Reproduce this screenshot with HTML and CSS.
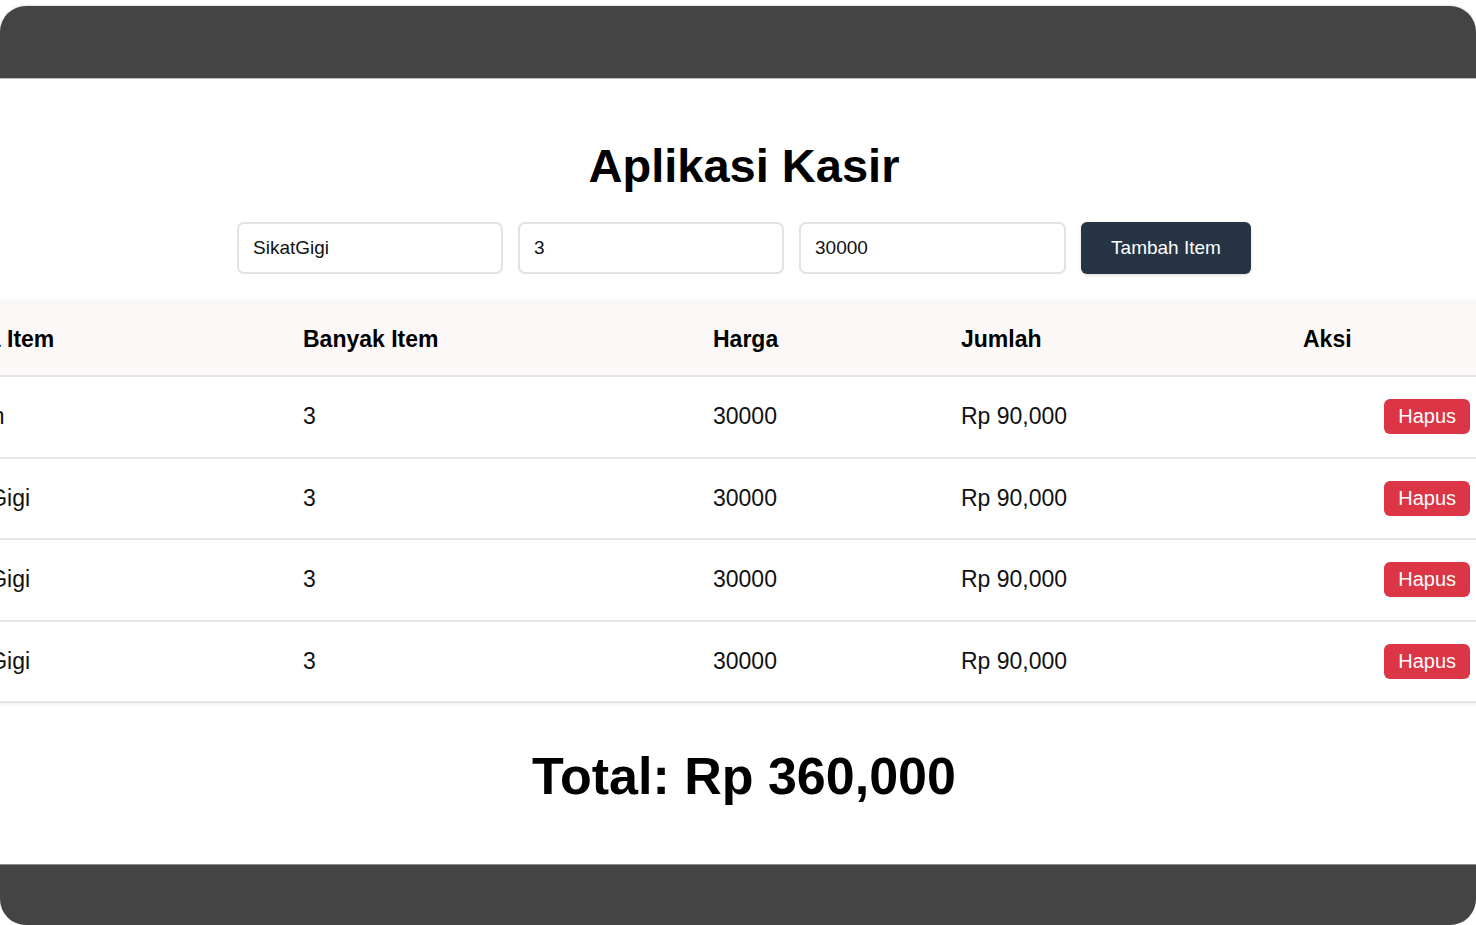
FILE: index.html
```html
<!DOCTYPE html>
<html lang="id">
<head>
<meta charset="utf-8">
<title>Aplikasi Kasir</title>
<link rel="stylesheet" href="styles.css">
</head>
<body>
<div class="device">
  <div class="screen">
    <div class="content">
      <h1 class="title">Aplikasi Kasir</h1>
      <div class="form-row">
        <input class="field" type="text" value="SikatGigi">
        <input class="field" type="text" value="3">
        <input class="field field-wide" type="text" value="30000">
        <button class="btn-add">Tambah Item</button>
      </div>
      <table class="items">
        <colgroup>
          <col class="c-name"><col class="c-qty"><col class="c-price"><col class="c-sum"><col class="c-act">
        </colgroup>
        <thead>
          <tr><th>Nama Item</th><th>Banyak Item</th><th>Harga</th><th>Jumlah</th><th>Aksi</th></tr>
        </thead>
        <tbody>
          <tr><td>Sabun</td><td>3</td><td>30000</td><td>Rp 90,000</td><td class="act"><button class="btn-del">Hapus</button></td></tr>
          <tr><td>SikatGigi</td><td>3</td><td>30000</td><td>Rp 90,000</td><td class="act"><button class="btn-del">Hapus</button></td></tr>
          <tr><td>SikatGigi</td><td>3</td><td>30000</td><td>Rp 90,000</td><td class="act"><button class="btn-del">Hapus</button></td></tr>
          <tr><td>SikatGigi</td><td>3</td><td>30000</td><td>Rp 90,000</td><td class="act"><button class="btn-del">Hapus</button></td></tr>
        </tbody>
      </table>
      <h2 class="total">Total: Rp 360,000</h2>
    </div>
  </div>
</div>
</body>
</html>
```
FILE: styles.css
```css
html, body {
  margin: 0;
  padding: 0;
  background: #ffffff;
  font-family: "Liberation Sans", Arial, sans-serif;
}
.device {
  margin-top: 6px;
  height: 919px;
  box-sizing: border-box;
  background: #444444;
  border-radius: 26px;
  padding: 72px 0 60px;
  box-shadow: 0 -1px 2px rgba(0,0,0,0.12);
  overflow: hidden;
}
.screen {
  height: 787px;
  background: #ffffff;
  overflow: hidden;
  border-top: 1px solid #bdbdbd;
  border-bottom: 1px solid #8a8a8a;
  box-sizing: border-box;
}
.content {
  padding-left: 12px;
  display: flex;
  flex-direction: column;
  align-items: center;
}
.title {
  margin: 60px 0 0;
  font-size: 47px;
  line-height: 53px;
  font-weight: bold;
  color: #000;
}
.form-row {
  display: flex;
  gap: 15px;
  margin-top: 30px;
}
.field {
  width: 266px;
  height: 52px;
  box-sizing: border-box;
  border: 2px solid #e2e2e2;
  border-radius: 7px;
  padding: 0 14px;
  font-family: "Liberation Sans", Arial, sans-serif;
  font-size: 19px;
  color: #111;
  background: #fff;
}
.field-wide { width: 267px; }
.btn-add {
  width: 170px;
  height: 52px;
  border: none;
  border-radius: 6px;
  background: #263445;
  color: #fff;
  font-family: "Liberation Sans", Arial, sans-serif;
  font-size: 19px;
  box-shadow: 0 1px 3px rgba(0,0,0,0.15);
}
.items {
  align-self: flex-start;
  margin: 29px 0 0 -91px;
  width: 1566px;
  table-layout: fixed;
  border-collapse: collapse;
  font-size: 23px;
  color: #111;
  box-shadow: 0 0 6px rgba(0,0,0,0.09);
}
.c-name { width: 365px; }
.c-qty { width: 410px; }
.c-price { width: 248px; }
.c-sum { width: 342px; }
.c-act { width: 201px; }
.items th {
  height: 72px;
  padding: 0 17px;
  text-align: left;
  font-weight: bold;
  background: #fdf8f8;
  border-bottom: 2px solid #e4e4e4;
  color: #000;
}
.items td {
  height: 79.5px;
  padding: 0 17px;
  border-bottom: 2px solid #e6e6e6;
  vertical-align: middle;
  white-space: nowrap;
}
.items td.act { text-align: right; }
.btn-del {
  height: 35px;
  padding: 0 14px;
  border: none;
  border-radius: 6px;
  background: #dc3545;
  color: #fff;
  font-family: "Liberation Sans", Arial, sans-serif;
  font-size: 20px;
}
.total {
  margin: 44px 0 0;
  font-size: 52px;
  line-height: 59px;
  font-weight: bold;
  color: #000;
}
```
